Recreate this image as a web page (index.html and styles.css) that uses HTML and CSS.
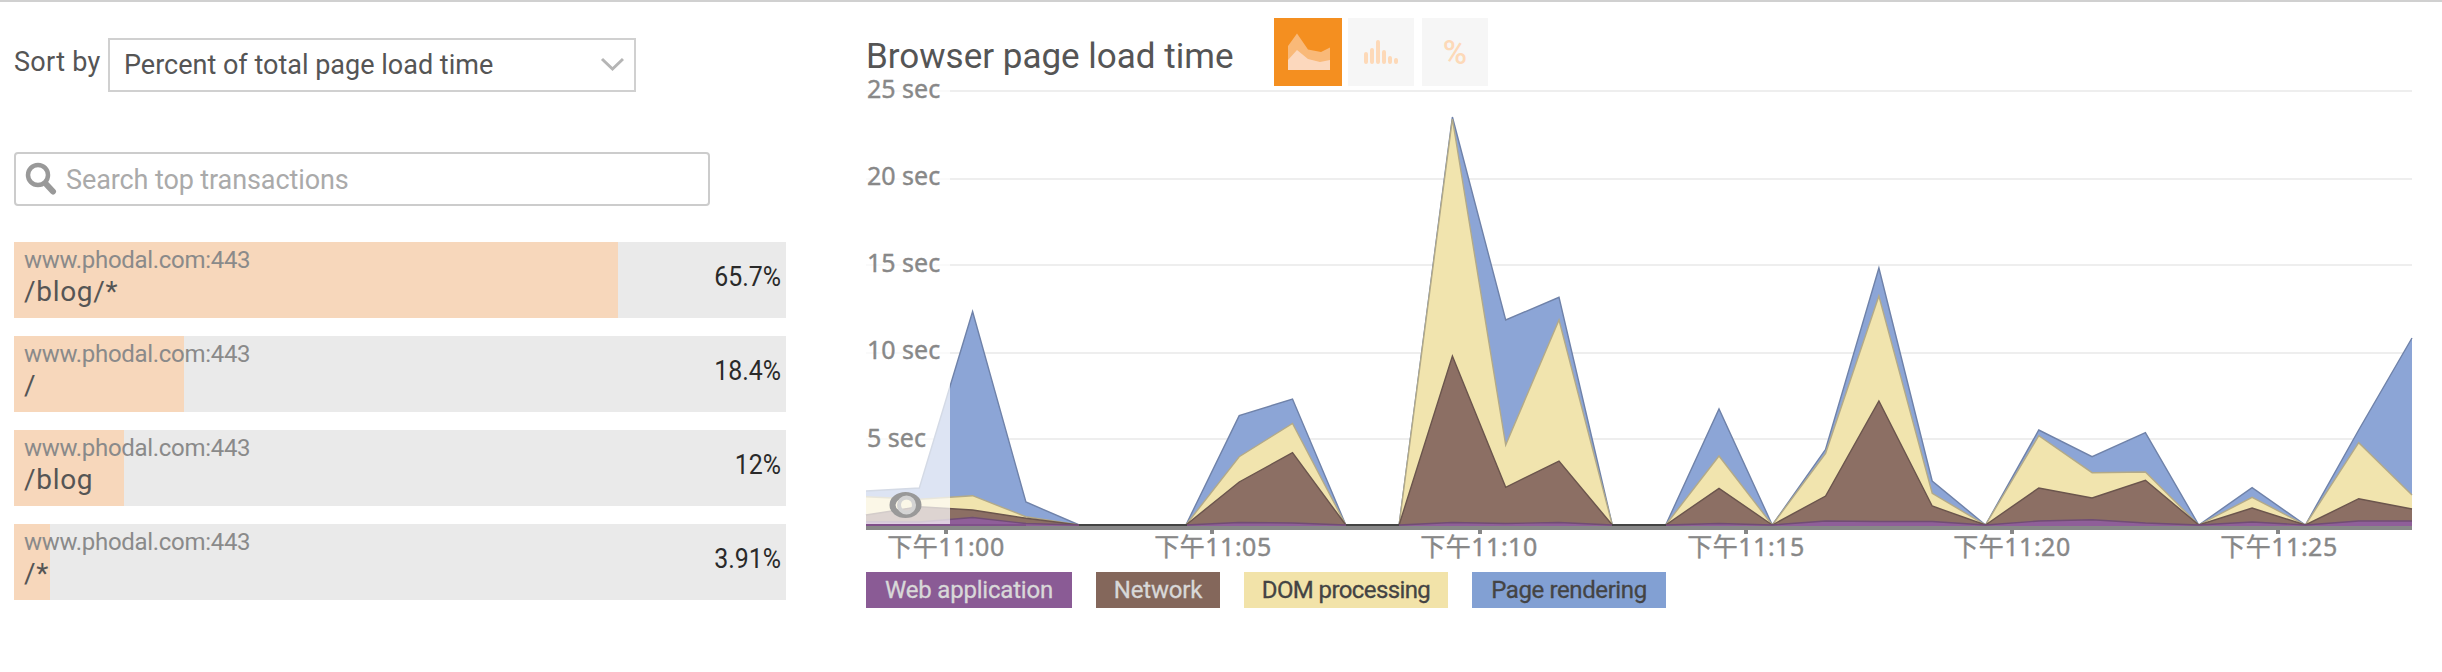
FILE: index.html
```html
<!DOCTYPE html>
<html lang="en">
<head>
<meta charset="utf-8">
<title>Browser page load time</title>
<link rel="stylesheet" href="styles.css">
</head>
<body>
<main class="page">
  <section class="side">
    <div class="sort">
      <span class="sort-label">Sort by</span>
      <div class="select"><span class="select-text">Percent of total page load time</span>
        <svg class="chevron" viewBox="0 0 24 16"><path d="M2 2L12.500 12L23 2"/></svg>
      </div>
    </div>
    <div class="search">
      <svg class="lens" viewBox="0 0 32 34"><circle cx="13" cy="13" r="10"/><path d="M19.500 20.500L22 23"/><path class="handle" d="M21.500 22.500L28 29.500"/></svg>
      <span class="search-text">Search top transactions</span>
    </div>
    <ul class="rows">
      <li class="row" style="--w:604px"><div><p class="host">www.phodal.com:443</p><p class="path">/blog/*</p></div><span class="pct">65.7%</span></li>
      <li class="row" style="--w:170px"><div><p class="host">www.phodal.com:443</p><p class="path">/</p></div><span class="pct">18.4%</span></li>
      <li class="row" style="--w:110px"><div><p class="host">www.phodal.com:443</p><p class="path">/blog</p></div><span class="pct">12%</span></li>
      <li class="row" style="--w:36px"><div><p class="host">www.phodal.com:443</p><p class="path">/*</p></div><span class="pct">3.91%</span></li>
    </ul>
  </section>
  <section class="main">
    <header class="head">
      <h1 class="title">Browser page load time</h1>
      <div class="modes">
        <span class="mode active"><svg width="68" height="68" viewBox="0 0 68 68"><path fill="#f9b978" d="M14 28L23 15.500L34 31.500L47 34L56 29.500V52H14Z"/><path fill="#fcd8bd" d="M14 42L23 32L34 41L46 44L56 42V52H14Z"/></svg></span>
        <span class="mode"><svg width="66" height="68" viewBox="0 0 66 68"><path class="bars" d="M18 36V44M24 32V44M30 24V44M36 34V44M42 40V44M48 42V44"/></svg></span>
        <span class="mode pc">%</span>
      </div>
    </header>
    <svg class="chart" width="1576" height="486" viewBox="866 86 1576 486">
      <path class="grid" d="M866 91H2412M866 179H2412M866 265H2412M866 353H2412M866 439H2412"/>
      <g id="areas"></g>
      <path stroke="#444" stroke-width="2" d="M1079 525H1187M1346 525H1399M1612 525H1666"/>
      <rect x="866" y="86" width="84" height="438" fill="#fff" opacity=".7"/>
      <path stroke="#80508a" stroke-width="2" d="M866 525H1026"/>
      <path class="axis" d="M866 528H2412M946 530V534M1212 530V534M1480 530V534M1746 530V534M2012 530V534M2278 530V534"/>
      <g class="tick">
        <text x="867" y="98">25 sec</text><text x="867" y="185">20 sec</text><text x="867" y="272">15 sec</text><text x="867" y="359">10 sec</text><text x="867" y="447">5 sec</text>
      </g>
      <g class="tick time">
        <text x="946" y="556">下午11:00</text><text x="1213" y="556">下午11:05</text><text x="1479" y="556">下午11:10</text><text x="1746" y="556">下午11:15</text><text x="2012" y="556">下午11:20</text><text x="2279" y="556">下午11:25</text>
      </g>
      <g fill="none"><ellipse cx="905.5" cy="505" rx="13" ry="10" stroke="#999" stroke-width="6"/><circle cx="906.5" cy="505" r="7.5" stroke="#d4d4d4" stroke-width="4"/></g>
    </svg>
    <div class="legend">
      <span class="key web">Web application</span><span class="key net">Network</span><span class="key dom">DOM processing</span><span class="key ren">Page rendering</span>
    </div>
  </section>
</main>
<script src="chart.js"></script>
</body>
</html>
```
FILE: styles.css
```css
* { box-sizing: border-box; }
body { margin: 0; background: #fff; font-family: Roboto, "Liberation Sans", sans-serif; color: #555; }
h1, p, ul { margin: 0; padding: 0; font-weight: 400; }
.page { display: flex; width: 2442px; height: 672px; border-top: 2px solid #d0d0d0; overflow: hidden; }
.side { width: 866px; padding: 36px 0 0 14px; font-size: 27px; }
.sort { display: flex; height: 54px; gap: 7px; }
.sort-label { width: 87px; line-height: 48px; white-space: nowrap; letter-spacing: .3px; }
.select { width: 528px; border: 2px solid #d0d0d0; display: flex; align-items: center; justify-content: space-between; padding: 0 10px 0 14px; line-height: 50px; }
.chevron { width: 24px; height: 16px; fill: none; stroke: #b5b5b5; stroke-width: 3; }
.search { margin-top: 60px; width: 696px; height: 54px; border: 2px solid #ccc; border-radius: 4px; display: flex; align-items: center; padding-left: 9px; color: #aaa; }
.search-text { letter-spacing: -.1px; padding-top: 2px; }
.lens { width: 32px; height: 34px; margin-right: 9px; fill: none; stroke: #999; stroke-width: 4.5; }
.lens .handle { stroke-width: 6; stroke-linecap: round; }
.rows { list-style: none; margin-top: 36px; display: grid; gap: 18px; }
.row { width: 772px; height: 76px; display: flex; justify-content: space-between; padding: 0 5px 0 10px; background: linear-gradient(#f7d7bb, #f7d7bb) 0 0 / var(--w) 100% no-repeat #eaeaea; }
.host { font-size: 24px; line-height: 28px; padding-top: 4px; color: #8a8a8a; letter-spacing: -.3px; }
.path { font-size: 28px; line-height: 36px; color: #555; letter-spacing: .7px; }
.pct { font-size: 28px; line-height: 70px; color: #2a2a2a; transform: scaleX(.89); transform-origin: right; }
.head { height: 84px; display: flex; }
.title { width: 408px; font-size: 35px; line-height: 109px; white-space: nowrap; }
.modes { display: flex; padding-top: 16px; gap: 8px; }
.mode { width: 66px; height: 68px; background: #f6f6f6; }
.mode.active { width: 68px; background: #f48f20; margin-right: -2px; }
.bars { stroke: #fdd9b8; stroke-width: 4; stroke-linecap: round; }
.pc { text-align: center; font-size: 33px; font-weight: 500; line-height: 69px; color: #fdd9b8; }
.chart { display: block; overflow: visible; }
.grid { stroke: #eee; stroke-width: 2; }
.axis { stroke: #888; stroke-width: 4; }
.tick { font: 25px "Noto Sans", "Noto Sans CJK SC", sans-serif; fill: #888; stroke: #888; stroke-width: .4px; }
.time { text-anchor: middle; letter-spacing: .5px; }
.legend { display: flex; gap: 24px; }
.key { height: 36px; line-height: 36px; text-align: center; font-size: 24px; letter-spacing: -.2px; color: #444; white-space: nowrap; -webkit-text-stroke: .3px; }
.web { width: 206px; background: #8a5b95; color: #d8d8d8; }
.net { width: 124px; background: #84675b; color: #d8d8d8; }
.dom { width: 204px; background: #f2e3a9; letter-spacing: -.6px; }
.ren { width: 194px; background: #82a0d3; letter-spacing: -.4px; }
```
FILE: chart.js
```js
const STEP = 53.31, LEFT = 866, ZERO = 526;
const z = 525;
// Upper edge of each stacked layer, in chart y units.
const layers = [
  ['#8ca5d6', '#6f82a9', [491,488,311.5,502,z,z,z,415.7,399,z,z,117,320,297.3,z,z,409,z,449.3,268,481,z,430,456.7,432.7,z,487.7,z,430,338]],
  ['#f1e4ae', '#b3aa88', [496.7,499.3,495.7,516.7,z,z,z,456.7,423.5,z,z,119,445,320,z,z,456,z,453.3,296,493.3,z,435.7,472.7,472,z,497.3,z,442.7,495]],
  ['#8c6f64', '#6b554d', [515,506.7,510,518.3,z,z,z,482,452.7,z,z,356,487.3,461,z,z,488.3,z,496,401,506,z,488,498,480.3,z,508,z,498.7,509]],
  ['#8f5f99', '#704d74', [521.7,522,517.5,523.5,z,z,z,522.5,523,z,z,522.5,523.5,522.5,z,z,523.5,z,521,521.5,521.5,z,521,519.7,523,z,522,z,521,521]]
];
document.getElementById('areas').innerHTML = layers.map(([fill, line, ys]) => {
  const pts = ys.map((y, i) => (LEFT + i * STEP).toFixed(1) + ',' + y).join(' ');
  return `<polygon fill="${fill}" points="${LEFT},${ZERO} ${pts} 2412,${ZERO}"/><polyline fill="none" stroke="${line}" stroke-width="1.4" points="${pts}"/>`;
}).join('');
```
